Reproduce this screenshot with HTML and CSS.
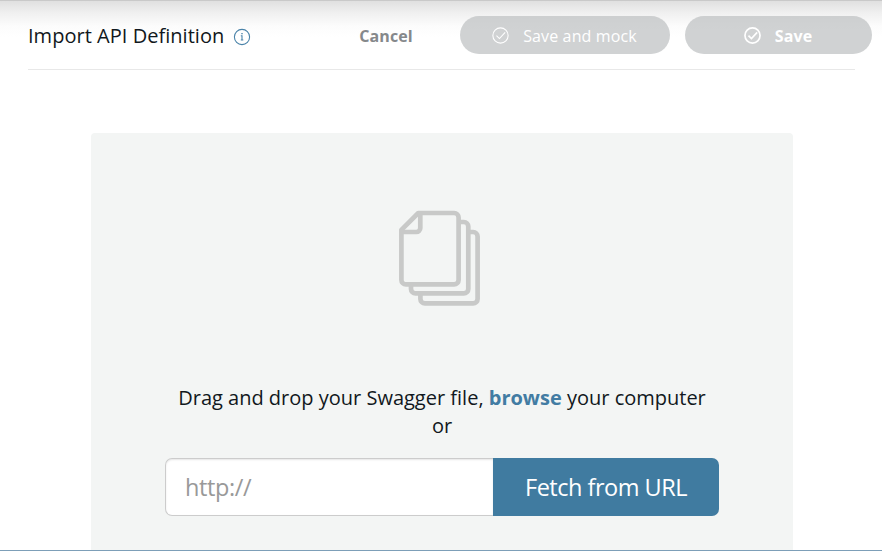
FILE: index.html
```html
<!DOCTYPE html>
<html lang="en">
<head>
<meta charset="utf-8">
<title>Import API Definition</title>
<link rel="stylesheet" href="styles.css">
</head>
<body>
<div class="page">
  <header class="header">
    <h1 class="title">Import API Definition</h1>
    <svg class="info" viewBox="0 0 18 18" fill="none" stroke="#4a83a9"><circle cx="9" cy="9" r="7.6" stroke-width="1.1"/><path d="M7.8 7.8H9V12M7.8 12H10.3" stroke-width="1.1"/><path d="M8.3 5.6H9.7" stroke-width="1.4"/></svg>
    <button class="cancel">Cancel</button>
    <button class="pill pill-mock">
      <svg class="check" viewBox="0 0 16 16" fill="none" stroke="#fff" stroke-width="1"><circle cx="8" cy="8" r="7.2"/><path d="M4.2 8.2L7 10.9L12.4 5"/></svg>
      <span>Save and mock</span>
    </button>
    <button class="pill pill-save">
      <svg class="check" viewBox="0 0 16 16" fill="none" stroke="#fff" stroke-width="1.6"><circle cx="8" cy="8" r="7.1"/><path d="M4.2 8.2L7 10.9L12.4 5"/></svg>
      <span>Save</span>
    </button>
  </header>
  <hr class="rule">
  <main class="dropzone">
    <svg class="files" viewBox="0 0 84 98" fill="none" stroke="#c8c9c8" stroke-width="4.7" stroke-linejoin="round">
      <path d="M20.3 3H56.1A4.5 4.5 0 0 1 60.6 7.5V69.9A4.5 4.5 0 0 1 56.1 74.4H7.9A4.5 4.5 0 0 1 3.4 69.9V19.8Z"/>
      <path d="M22.3 3V18A4 4 0 0 1 18.3 22H3.4"/>
      <path d="M60.6 12H65.8A4.5 4.5 0 0 1 70.3 16.5V78.9A4.5 4.5 0 0 1 65.8 83.4H17.5A4.5 4.5 0 0 1 13 78.9V74.4"/>
      <path d="M70.3 22H75.1A4.5 4.5 0 0 1 79.6 26.5V88.9A4.5 4.5 0 0 1 75.1 93.4H26.9A4.5 4.5 0 0 1 22.4 88.9V83.4"/>
    </svg>
    <p class="hint">Drag and drop your Swagger file, <a class="browse">browse</a> your computer<br>or</p>
    <div class="fetch">
      <input class="url" type="text" placeholder="http://">
      <button class="go">Fetch from URL</button>
    </div>
  </main>
</div>
</body>
</html>
```
FILE: styles.css
```css
* { box-sizing: border-box; }
body { margin: 0; background: #fff; font-family: "Open Sans", sans-serif; color: #111820; }
button { border: 0; padding: 0; font-family: inherit; }
.page {
  height: 551px;
  overflow: hidden;
  display: flex;
  flex-direction: column;
  border-top: 1px solid #c9c9c9;
  border-bottom: 1px solid #7d9fb8;
  background: linear-gradient(#e0e0e0, #f0f0f0 12px, #fcfcfc 25px, #fff 36px);
}
.header { flex: none; height: 68px; display: flex; align-items: center; padding: 0 10px 0 28px; }
.title { margin: 0; padding-top: 2px; width: 205px; font-size: 20px; font-weight: 400; line-height: 28px; letter-spacing: .03px; white-space: nowrap; }
.info { width: 18px; height: 18px; margin-top: 4px; }
.cancel { background: none; margin-left: 108px; padding-top: 2px; width: 54px; font-size: 16px; letter-spacing: .1px; font-weight: 700; color: #85888b; }
.pill {
  height: 38px;
  display: flex;
  align-items: center;
  justify-content: center;
  gap: 14px;
  border-radius: 19px;
  color: #fff;
  font-size: 16px;
  background: rgba(190, 192, 194, .72);
}
.pill span { padding-top: 2px; letter-spacing: .13px; }
.pill-mock { width: 210px; margin-left: 47px; padding-right: 1px; }
.pill-save { width: 187px; margin-left: 15px; padding-right: 1px; font-weight: 700; }
.check { width: 17px; height: 17px; margin-top: 1px; }
.rule { flex: none; height: 1px; width: 827px; margin: 0 0 0 28px; border: 0; background: #e8e8e8; }
.dropzone {
  flex: 1;
  width: 702px;
  margin: 63px 0 0 91px;
  padding: 77px 74px 0;
  border-radius: 4px 4px 0 0;
  background: #f3f5f4;
  display: flex;
  flex-direction: column;
  align-items: center;
}
.files { flex: none; width: 84px; height: 98px; margin-right: 4px; overflow: visible; }
.hint { margin: 76px 0 0; font-size: 20px; line-height: 28px; text-align: center; white-space: nowrap; }
.browse { color: #427ca3; font-weight: 700; }
.fetch { margin-top: 18px; display: flex; width: 554px; height: 58px; }
.url {
  width: 328px;
  padding: 0 20px 1px 19px;
  border: 1px solid #ccc;
  border-right: 0;
  border-radius: 7px 0 0 7px;
  background: #fff;
  box-shadow: inset 0 1px 2px rgba(0, 0, 0, .1);
  font: 23.5px "Open Sans", sans-serif;
  letter-spacing: -.4px;
}
.url::placeholder { color: #999; opacity: 1; }
.go { width: 226px; padding-bottom: 1px; border-radius: 0 7px 7px 0; background: #407ba0; color: #fff; font-size: 23.5px; letter-spacing: -.5px; }
```
